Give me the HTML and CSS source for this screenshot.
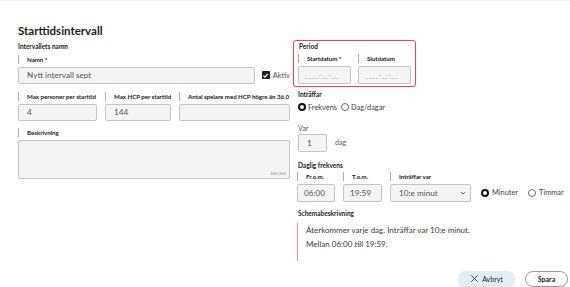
FILE: index.html
```html
<!DOCTYPE html>
<html lang="sv">
<head>
    <meta charset="UTF-8">
    <meta name="viewport" content="width=device-width, initial-scale=1.0">
    <title>Starttidsintervall</title>
    <link rel="stylesheet" href="styles.css">
</head>
<body>
    <div class="page">
        <h1 class="title">Starttidsintervall</h1>

        <div class="columns">
            <!-- Vänster kolumn -->
            <div class="col-left">
                <div class="section-title">Intervallets namn</div>
                <div class="field">
                    <label class="lbl">Namn *</label>
                    <div class="name-row">
                        <div class="input name-input">Nytt intervall sept</div>
                        <div class="check">
                            <span class="checkbox">
                                <svg width="7" height="7" viewBox="0 0 10 10"><path d="M2 5.2 L4.2 7.4 L8.2 2.8" fill="none" stroke="#fff" stroke-width="1.8"/></svg>
                            </span>
                            <span class="check-text">Aktiv</span>
                        </div>
                    </div>
                </div>

                <div class="row3">
                    <div class="field">
                        <label class="lbl">Max personer per starttid</label>
                        <div class="input">4</div>
                    </div>
                    <div class="field">
                        <label class="lbl">Max HCP per starttid</label>
                        <div class="input">144</div>
                    </div>
                    <div class="field">
                        <label class="lbl">Antal spelare med HCP högre än 36.0</label>
                        <div class="input"></div>
                    </div>
                </div>

                <div class="field">
                    <label class="lbl">Beskrivning</label>
                    <div class="textarea">
                        <span class="counter">256/256</span>
                    </div>
                </div>
            </div>

            <!-- Höger kolumn -->
            <div class="col-right">
                <div class="period">
                    <div class="section-title">Period</div>
                    <div class="date-row">
                        <div class="field">
                            <label class="lbl">Startdatum *</label>
                            <div class="input date">____-__-__</div>
                        </div>
                        <div class="field">
                            <label class="lbl">Slutdatum</label>
                            <div class="input date">____-__-__</div>
                        </div>
                    </div>
                </div>

                <div class="section-title occurs">Inträffar</div>
                <div class="radios">
                    <span class="radio on"></span><span class="radio-text">Frekvens</span>
                    <span class="radio"></span><span class="radio-text">Dag/dagar</span>
                </div>

                <div class="plain-label">Var</div>
                <div class="every">
                    <div class="input every-input">1</div>
                    <span class="every-unit">dag</span>
                </div>

                <div class="section-title daily">Daglig frekvens</div>
                <div class="time-row">
                    <div class="field">
                        <label class="lbl">Fr.o.m.</label>
                        <div class="input time">06:00</div>
                    </div>
                    <div class="field">
                        <label class="lbl">T.o.m.</label>
                        <div class="input time t2">19:59</div>
                    </div>
                    <div class="field">
                        <label class="lbl">Inträffar var</label>
                        <div class="input select">
                            <span>10:e minut</span>
                            <svg width="6" height="4" viewBox="0 0 6 4"><path d="M1 1 L3 3 L5 1" fill="none" stroke="#555" stroke-width="0.9"/></svg>
                        </div>
                    </div>
                    <div class="radios unit">
                        <span class="radio on"></span><span class="radio-text">Minuter</span>
                        <span class="radio"></span><span class="radio-text">Timmar</span>
                    </div>
                </div>

                <div class="section-title schema-title">Schemabeskrivning</div>
                <div class="schema">
                    <div>Återkommer varje dag. Inträffar var 10:e minut.</div>
                    <div>Mellan 06:00 till 19:59.</div>
                </div>
            </div>
        </div>

        <div class="actions">
            <button class="btn cancel">
                <svg width="9" height="9" viewBox="0 0 10 10"><path d="M1.5 1.5 L8.5 8.5 M8.5 1.5 L1.5 8.5" stroke="#333" stroke-width="1"/></svg>
                Avbryt
            </button>
            <button class="btn save">Spara</button>
        </div>
    </div>
</body>
</html>
```

FILE: styles.css
```css
body {
    margin: 0;
    font-family: Lato, "Open Sans", sans-serif;
    color: #222;
    background: #fff;
    border-top: 1px solid #eef6f5;
}

.page {
    padding: 21px 0 0 18px;
}

.title {
    margin: 0;
    font-size: 11.5px;
    line-height: 17px;
    font-weight: 700;
    color: #1c1c1c;
}

.columns {
    display: grid;
    grid-template-columns: 272px 1fr;
    column-gap: 3px;
    margin-top: 1px;
}

.section-title {
    font-size: 6.5px;
    font-weight: 700;
    line-height: 10px;
    height: 10px;
}

.col-left .section-title {
    margin-top: 2px;
    margin-bottom: 2px;
}

.field {
    display: flex;
    flex-direction: column;
}

.lbl {
    display: block;
    font-size: 6.2px;
    font-weight: 700;
    line-height: 9px;
    height: 9px;
    padding-left: 8px;
    border-left: 1.5px solid #e59a91;
    margin: 0.5px 0 3px 0;
    white-space: nowrap;
    letter-spacing: -0.05px;
}

.input {
    box-sizing: border-box;
    height: 17px;
    border: 1px solid #c4c4c4;
    border-radius: 2px;
    background: #f4f4f4;
    font-size: 8.2px;
    line-height: 15px;
    color: #555;
    padding-left: 8px;
}

.name-row {
    display: flex;
    align-items: center;
}

.name-input {
    width: 238px;
}

.check {
    display: flex;
    align-items: center;
    margin-left: 7px;
}

.checkbox {
    width: 8px;
    height: 8px;
    background: #222;
    border-radius: 1px;
    display: flex;
    align-items: center;
    justify-content: center;
}

.check-text {
    font-size: 7.5px;
    color: #555;
    margin-left: 3px;
}

.row3 {
    display: grid;
    grid-template-columns: 79px 66px 1fr;
    column-gap: 8px;
    margin-top: 8px;
}

.row3 + .field {
    margin-top: 6px;
}

.textarea {
    position: relative;
    box-sizing: border-box;
    height: 39px;
    border: 1px solid #c4c4c4;
    border-radius: 2px;
    background: #f4f4f4;
}

.counter {
    position: absolute;
    right: 3px;
    bottom: 2px;
    font-size: 4px;
    color: #888;
}

/* Höger kolumn */
.period {
    box-sizing: border-box;
    width: 123px;
    height: 47px;
    border: 1.5px solid #dd4a52;
    border-radius: 3px;
    padding: 1px 0 0 4px;
    box-shadow: 0 0 2px rgba(221, 74, 82, 0.25);
}

.period .section-title {
    margin-left: 1px;
}

.date-row {
    display: grid;
    grid-template-columns: 53px 53px;
    column-gap: 7px;
    margin-top: 1px;
}

.date-row .lbl {
    margin-bottom: 3px;
}

.date {
    height: 18px;
    font-size: 7px;
    line-height: 16px;
    color: #aaa;
    letter-spacing: 0.2px;
    padding-left: 6px;
}

.col-right > .section-title {
    margin-left: 5px;
}

.occurs {
    margin-top: 3px;
}

.radios {
    display: flex;
    align-items: center;
    margin-top: 2px;
    margin-left: 5px;
    height: 10px;
}

.radio {
    box-sizing: border-box;
    width: 8px;
    height: 8px;
    border-radius: 50%;
    border: 0.8px solid #666;
}

.radio.on {
    border: 2.2px solid #111;
}

.radio-text {
    font-size: 7.4px;
    color: #444;
    margin-left: 2px;
    margin-right: 4px;
}

.plain-label {
    font-size: 7px;
    color: #555;
    line-height: 10px;
    margin: 11px 0 1px 5px;
}

.every {
    display: flex;
    align-items: center;
    margin-left: 5px;
}

.every-input {
    width: 29px;
    height: 18px;
    line-height: 16px;
}

.every-unit {
    font-size: 7px;
    color: #555;
    margin-left: 8px;
    margin-top: -2px;
}

.daily {
    margin-top: 9px;
}

.time-row {
    display: flex;
    align-items: flex-end;
    margin-left: 4px;
}

.time-row .field + .field {
    margin-left: 8px;
}

.time {
    width: 38px;
    height: 18px;
    line-height: 16px;
    padding-left: 6px;
}

.t2 {
    width: 39px;
}

.select {
    width: 81px;
    height: 18px;
    line-height: 16px;
    display: flex;
    justify-content: space-between;
    align-items: center;
    padding-right: 4px;
}

.radios.unit {
    height: 18px;
    margin-left: 10px;
    margin-top: 0;
}

.radios.unit .radio-text {
    margin-left: 3px;
    margin-right: 10px;
}

.schema-title {
    margin-top: 7px;
}

.schema {
    margin: 4px 0 0 4px;
    border-left: 1.5px solid #e59a91;
    padding: 0 0 10px 8px;
    font-size: 8px;
    line-height: 14px;
    color: #3a3a3a;
    height: 28px;
}

.actions {
    display: flex;
    justify-content: flex-end;
    gap: 10px;
    margin-top: 10px;
    padding-right: 2px;
}

.btn {
    font-family: Lato, "Open Sans", sans-serif;
    height: 16px;
    border-radius: 8px;
    font-size: 7px;
    color: #222;
    padding: 0;
    display: flex;
    align-items: center;
    justify-content: center;
    gap: 3px;
}

.cancel {
    width: 57px;
    background: #e2eef5;
    border: none;
    box-shadow: 0 1px 2px rgba(0, 0, 0, 0.12);
}

.save {
    width: 43px;
    background: #fff;
    border: 1px solid #9a9a9a;
    font-weight: 700;
}
```
